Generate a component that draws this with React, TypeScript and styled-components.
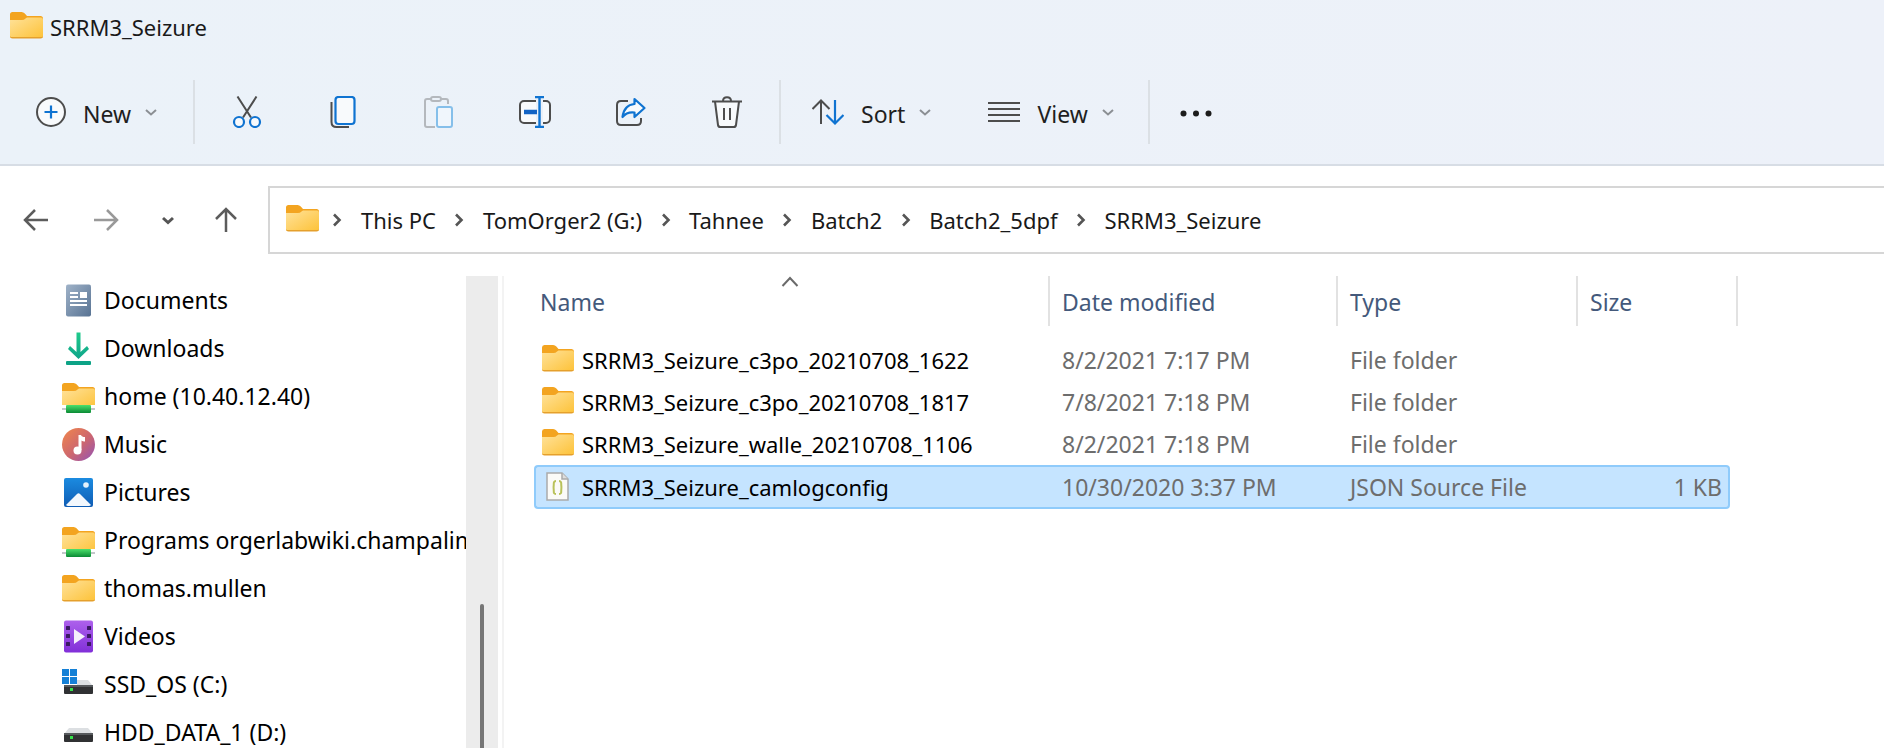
import React from "react";
import styled, { createGlobalStyle } from "styled-components";

const GlobalStyle = createGlobalStyle`
  * { box-sizing: border-box; }
  body { margin: 0; background: #fff; }
  body, button, table {
    font-family: "Noto Sans", "Open Sans", sans-serif;
    font-size: 23px;
    line-height: 32px;
    color: #191919;
  }
  svg { display: block; flex: none; }
`;

const Window = styled.div`
  display: flex;
  flex-direction: column;
  height: 100vh;
  overflow: hidden;
  background: #fff;
`;

const Header = styled.header`
  flex: none;
  background: linear-gradient(90deg, #ebf2f9, #edf1f9);
  border-bottom: 2px solid #d7dde5;
`;

const TitleBar = styled.div`
  display: flex;
  align-items: center;
  gap: 7px;
  height: 54px;
  padding: 0 10px;
`;

const Title = styled.h1`
  margin: 0;
  font-size: 22px;
  font-weight: 400;
`;

const Toolbar = styled.div`
  display: flex;
  align-items: center;
  height: 110px;
  padding-top: 6px;
`;

const Divider = styled.span`
  width: 2px;
  height: 64px;
  margin: 0 4px;
  background: #dbe0e5;
`;

const ToolButton = styled.button`
  display: flex;
  align-items: center;
  justify-content: center;
  width: 96px;
  height: 64px;
  padding: 0;
  border: 0;
  background: none;
  color: #1f1f1f;
`;

const MenuButton = styled(ToolButton)<{ $lead?: boolean }>`
  width: auto;
  padding: ${(p) => (p.$lead ? "0 32px 0 36px" : "0 30px 0 27px")};
`;

const MoreButton = styled(ToolButton)`
  width: 84px;
`;

const ToolLabel = styled.span`
  margin: 4px 14px 0 17px;
`;

const NavRow = styled.div`
  display: flex;
  flex: none;
  align-items: center;
  padding-top: 20px;
`;

const NavButtons = styled.div`
  display: flex;
  flex: none;
  align-items: center;
  gap: 24px;
  width: 268px;
  padding-left: 22px;
`;

const NavButton = styled.button<{ $w: number }>`
  display: flex;
  align-items: center;
  justify-content: center;
  width: ${(p) => p.$w}px;
  height: 44px;
  padding: 0;
  border: 0;
  background: none;
`;

const AddressBar = styled.nav`
  display: flex;
  flex: 1;
  align-items: center;
  height: 68px;
  padding-left: 16px;
  border: 2px solid #d6d6d6;
  border-right: 0;
`;

const Crumb = styled.a`
  font-size: 22px;
  color: #191919;
  text-decoration: none;
  white-space: nowrap;
`;

const CrumbSep = styled.span<{ $first?: boolean }>`
  display: flex;
  justify-content: center;
  width: ${(p) => (p.$first ? 42 : 47)}px;
  padding-right: ${(p) => (p.$first ? 6 : 0)}px;
`;

const Body = styled.div`
  display: flex;
  flex: 1;
  min-height: 0;
  padding-top: 22px;
`;

const Sidebar = styled.aside`
  flex: none;
  width: 466px;
  overflow: hidden;
`;

const Tree = styled.ul`
  margin: 0;
  padding: 0 0 0 62px;
  list-style: none;
`;

const TreeLink = styled.a`
  display: flex;
  align-items: center;
  gap: 9px;
  height: 48px;
  color: #000;
  text-decoration: none;
  white-space: nowrap;
`;

const ScrollTrack = styled.div`
  display: flex;
  flex: none;
  justify-content: center;
  align-items: flex-end;
  width: 32px;
  background: #ececec;
`;

const ScrollThumb = styled.div`
  width: 4px;
  height: 144px;
  border-radius: 2px 2px 0 0;
  background: #767676;
`;

const Files = styled.main`
  flex: 1;
  min-width: 0;
  margin-left: 4px;
  padding-left: 30px;
  border-left: 2px solid #f3f3f3;
`;

const FileTable = styled.table`
  width: 1204px;
  table-layout: fixed;
  border-collapse: separate;
  border-spacing: 0;
`;

const Column = styled.col<{ $w: number }>`
  width: ${(p) => p.$w}px;
`;

const HeadCell = styled.th<{ $name?: boolean }>`
  position: relative;
  height: 50px;
  padding: 2px 0 0 ${(p) => (p.$name ? 6 : 12)}px;
  border-right: 2px solid #e2e2e2;
  color: #44597b;
  font-weight: 400;
  text-align: left;
`;

const SortMark = styled.span`
  position: absolute;
  top: 0;
  left: 50%;
  margin-left: -10px;
`;

const Gap = styled.tr`
  height: 13px;
`;

const Cell = styled.td<{ $right?: boolean }>`
  height: 42px;
  padding: 0 ${(p) => (p.$right ? 8 : 0)}px 0 12px;
  color: #6d6d6d;
  white-space: nowrap;
  text-align: ${(p) => (p.$right ? "right" : "left")};
`;

const NameCell = styled(Cell)`
  padding-left: 8px;
  color: #000;
  font-size: 22px;
`;

const FileName = styled.div`
  display: flex;
  align-items: center;
  gap: 8px;
`;

const Row = styled.tr<{ $selected?: boolean }>`
  ${(p) =>
    p.$selected &&
    `
    td:not(:last-child) {
      height: 44px;
      background: #c5e4ff;
      border: 2px solid #8fcbfb;
      border-width: 2px 0;
    }
    td:first-child { padding-left: 6px; border-left-width: 2px; border-radius: 4px 0 0 4px; }
    td:nth-child(4) { padding-right: 6px; border-right-width: 2px; border-radius: 0 4px 4px 0; }
  `}
`;

const INK = "#4d4d4d";
const BLUE = "#0f73d1";

const Folder = ({ w = 33, net = false, raised = false }: { w?: number; net?: boolean; raised?: boolean }) => (
  <svg width={w} height="33" viewBox={raised ? "0 2 33 33" : "0 0 33 33"} preserveAspectRatio="none">
    <defs>
      <linearGradient id="fold" x1="0" y1="0" x2="1" y2="1">
        <stop offset="0" stopColor="#ffe29a" />
        <stop offset="1" stopColor="#fdc238" />
      </linearGradient>
      <linearGradient id="pipe" x1="0" y1="0" x2="0" y2="1">
        <stop offset="0" stopColor="#4ce06c" />
        <stop offset="1" stopColor="#0a8a35" />
      </linearGradient>
    </defs>
    <path d="M0 5.5Q0 3 2.500 3H11.500q2 0 3.300 1.500L17 7H30.500q2.500 0 2.500 2.500V15H0z" fill="#f3a420" />
    <path d="M0 11H12q2 0 3.500-1.500L17 8.500H31q2 0 2 2V27q0 2-2 2H2q-2 0-2-2z" fill="url(#fold)" />
    <path d="M0 27q0 2.500 2.500 2.500H30.500q2.500 0 2.500-2.500l-1 1H1z" fill="#e5a02c" />
    {net && (
      <>
        <rect x="0" y="25" width="33" height="8" fill="#fff" />
        <rect x="0" y="28" width="33" height="2" fill="#c3c7ca" />
        <rect x="4" y="25" width="25" height="8" rx="1" fill="url(#pipe)" />
      </>
    )}
  </svg>
);

const DocumentsIcon = () => (
  <svg width="33" height="33" viewBox="0 0 33 33">
    <defs>
      <linearGradient id="doc" x1="0" y1="0" x2="1" y2="1">
        <stop offset="0" stopColor="#9fb2c8" />
        <stop offset="1" stopColor="#587393" />
      </linearGradient>
    </defs>
    <rect x="4" y="0.500" width="25" height="32" rx="2" fill="url(#doc)" />
    <path d="M8 9H16M8 13H16M8 17H25M8 21H25" stroke="#fff" strokeWidth="2" />
    <rect x="18" y="8" width="7" height="6" fill="#fff" />
  </svg>
);

const DownloadsIcon = () => (
  <svg width="33" height="33" viewBox="0 0 33 33" fill="none">
    <defs>
      <linearGradient id="down" x1="0" y1="0" x2="0" y2="33" gradientUnits="userSpaceOnUse">
        <stop offset="0" stopColor="#1fcb8b" />
        <stop offset="1" stopColor="#0b9b8a" />
      </linearGradient>
    </defs>
    <path d="M14.500 0.500h4V20l6.500-6 2 3-10.500 10L6 17l2-3 6.500 6z" fill="url(#down)" />
    <rect x="4" y="29" width="25" height="4" rx="1" fill="#0da386" />
  </svg>
);

const MusicIcon = () => (
  <svg width="33" height="33" viewBox="0 0 33 33">
    <defs>
      <linearGradient id="mus" x1="0" y1="0" x2="1" y2="1">
        <stop offset="0" stopColor="#f2874a" />
        <stop offset="0.55" stopColor="#cc6670" />
        <stop offset="1" stopColor="#9152b8" />
      </linearGradient>
    </defs>
    <circle cx="16.500" cy="16.500" r="16.500" fill="url(#mus)" />
    <path d="M16.500 7h2.500c.5 1.500 2 2 4 2v4.500c-1.500 0-2.500-.3-3.500-1V22h-3z" fill="#fff" />
    <circle cx="15.500" cy="22.500" r="4" fill="#fff" />
  </svg>
);

const PicturesIcon = () => (
  <svg width="33" height="33" viewBox="0 0 33 33">
    <defs>
      <linearGradient id="pic" x1="0" y1="0" x2="0" y2="1">
        <stop offset="0" stopColor="#1b8be0" />
        <stop offset="1" stopColor="#0f5cb4" />
      </linearGradient>
    </defs>
    <rect x="2" y="2" width="29" height="29" rx="2" fill="url(#pic)" />
    <path d="M4 29 15 18q1.500-1.500 3 0L29 29q-1 1-2 1H6q-1 0-2-1z" fill="#f3f8fd" />
    <circle cx="24" cy="9" r="2.800" fill="#e4f2fc" />
  </svg>
);

const VideosIcon = () => (
  <svg width="33" height="33" viewBox="0 0 33 33">
    <defs>
      <linearGradient id="vid" x1="0" y1="0" x2="0" y2="1">
        <stop offset="0" stopColor="#ad61ec" />
        <stop offset="1" stopColor="#812fd8" />
      </linearGradient>
    </defs>
    <rect x="2" y="0.500" width="29" height="32" rx="2" fill="url(#vid)" />
    {[6, 14, 22].map((y) => (
      <g key={y} fill="#3a1a63">
        <rect x="4" y={y} width="4" height="4" rx="0.500" />
        <rect x="25" y={y} width="4" height="4" rx="0.500" />
      </g>
    ))}
    <path d="M12 9v15l11-7.500z" fill="#f5effb" />
  </svg>
);

const DriveIcon = ({ os = false }: { os?: boolean }) => (
  <svg width="33" height="33" viewBox="0 0 33 33">
    <path d="M7 12H26l5 6H2z" fill="#dcdfe2" />
    <rect x="2" y="17" width="29" height="9" rx="1" fill="#303133" />
    <rect x="2" y="17" width="29" height="2" fill="#56595c" />
    <rect x="8" y="20" width="3" height="3" fill="#35e04a" />
    {os && (
      <>
        <rect x="0" y="1" width="15" height="16" fill="#fff" />
        <path d="M0 1h7v7H0zM8 1h7v7H8zM0 9h7v7H0zM8 9h7v7H8z" fill="#1580d6" />
      </>
    )}
  </svg>
);

const JsonIcon = () => (
  <svg width="32" height="30" viewBox="0 0 32 30" fill="none">
    <path d="M5 1H20l6 6V28H5z" fill="#fbfbf8" stroke="#aaa" strokeWidth="1.500" />
    <path d="M20 1v6h6" fill="#ddd" stroke="#aaa" strokeWidth="1.500" />
    <path d="M14 9c-3 0-2 3-2.300 4.500-.2 1.500-.2 2.500 0 4C12 19.500 11 22 14 22M17 9c3 0 2 3 2.300 4.500.2 1.500.2 2.500 0 4C19 19.500 20 22 17 22" stroke="#b9c25a" strokeWidth="2" />
  </svg>
);

const Chevron = ({ color = "#8b8f94", width = 2 }: { color?: string; width?: number }) => (
  <svg width="12" height="12" viewBox="0 0 12 12" fill="none" stroke={color} strokeWidth={width}>
    <path d="M1 4l5 4.500L11 4" />
  </svg>
);

const ToolIcon = ({ children }: { children: React.ReactNode }) => (
  <svg width="32" height="32" viewBox="0 0 32 32" fill="none" stroke={INK} strokeWidth="2">
    {children}
  </svg>
);

const NewIcon = () => (
  <svg width="30" height="30" viewBox="0 0 30 30" fill="none">
    <circle cx="15" cy="15" r="14" stroke={INK} strokeWidth="2" fill="#f8fafc" />
    <path d="M15 8.500v13M8.500 15h13" stroke={BLUE} strokeWidth="2.200" />
  </svg>
);

const CutIcon = () => (
  <ToolIcon>
    <path d="M6.500 0.500 20 21.500M25.500 0.500 12 21.500" />
    <circle cx="8" cy="26" r="5" stroke={BLUE} strokeWidth="2.200" fill="#f8fafc" />
    <circle cx="24" cy="26" r="5" stroke={BLUE} strokeWidth="2.200" fill="#f8fafc" />
  </ToolIcon>
);

const CopyIcon = () => (
  <ToolIcon>
    <path d="M4.500 6V26q0 5 5 5H22" />
    <rect x="8.500" y="1" width="19" height="27" rx="3" stroke={BLUE} strokeWidth="2.200" fill="#f8fafc" />
  </ToolIcon>
);

const PasteIcon = () => (
  <ToolIcon>
    <g stroke="#b4b8bd">
      <path d="M8 3H4q-2 0-2 2V29q0 2 2 2h8M18 3h5q2 0 2 2v3" />
      <rect x="8" y="1" width="10" height="4" rx="2" />
    </g>
    <rect x="14" y="11" width="15" height="20" rx="2" stroke="#85bfea" fill="#f0f6fc" />
  </ToolIcon>
);

const RenameIcon = () => (
  <ToolIcon>
    <rect x="1" y="5" width="30" height="22" rx="4" fill="#f8fafc" />
    <rect x="17" y="2" width="7" height="28" fill="#ecf1f8" stroke="none" />
    <path d="M20.500 1v30M16 1h9M16 31h9" stroke={BLUE} strokeWidth="2.400" />
    <path d="M5 16h13" stroke="#1263c4" strokeWidth="4.500" />
  </ToolIcon>
);

const ShareIcon = () => (
  <ToolIcon>
    <path d="M13 5H6Q2 5 2 9V25q0 4 4 4H22q4 0 4-4V22" />
    <path d="M19.500 3 29.500 12 19.500 21V16.500Q12 15.500 7.500 21 9 9 19.500 8z" stroke={BLUE} strokeWidth="2.200" fill="#f8fafc" strokeLinejoin="round" />
  </ToolIcon>
);

const TrashIcon = () => (
  <ToolIcon>
    <path d="M4 5.500 7 29q.3 2 2.300 2H22.700q2 0 2.300-2L28 5.500" fill="#f8fafc" />
    <path d="M1 5.500H31M12 5c0-5 8-5 8 0M13 12v12M19 12v12" />
  </ToolIcon>
);

const SortIcon = () => (
  <ToolIcon>
    <path d="M9 28V4.500M0.500 13 9 4.500 17.500 13" />
    <path d="M23 4v23.500M14.500 19 23 27.500 31.500 19" stroke={BLUE} strokeWidth="2.200" />
  </ToolIcon>
);

const ViewIcon = () => (
  <ToolIcon>
    <path d="M0 7H32M0 13H32M0 19H32M0 25H32" />
  </ToolIcon>
);

const MoreIcon = () => (
  <svg width="32" height="32" viewBox="0 0 32 32" fill="#1c1c1c">
    <circle cx="3.500" cy="17.500" r="3" />
    <circle cx="16" cy="17.500" r="3" />
    <circle cx="28.500" cy="17.500" r="3" />
  </svg>
);

const ArrowIcon = ({ turn = 0, color = "#5c5c5c" }: { turn?: number; color?: string }) => (
  <svg width="26" height="26" viewBox="0 0 26 26" fill="none" stroke={color} strokeWidth="2.500">
    <path d="M25 13H2M12 3 2 13l10 10" transform={`rotate(${turn} 13 13)`} />
  </svg>
);

const tools = [
  { label: "Cut", icon: <CutIcon /> },
  { label: "Copy", icon: <CopyIcon /> },
  { label: "Paste", icon: <PasteIcon />, disabled: true },
  { label: "Rename", icon: <RenameIcon /> },
  { label: "Share", icon: <ShareIcon /> },
  { label: "Delete", icon: <TrashIcon /> },
];

const crumbs = ["This PC", "TomOrger2 (G:)", "Tahnee", "Batch2", "Batch2_5dpf", "SRRM3_Seizure"];

const places = [
  { name: "Documents", icon: <DocumentsIcon /> },
  { name: "Downloads", icon: <DownloadsIcon /> },
  { name: "home (10.40.12.40)", icon: <Folder net /> },
  { name: "Music", icon: <MusicIcon /> },
  { name: "Pictures", icon: <PicturesIcon /> },
  { name: "Programs orgerlabwiki.champalim", icon: <Folder net /> },
  { name: "thomas.mullen", icon: <Folder /> },
  { name: "Videos", icon: <VideosIcon /> },
  { name: "SSD_OS (C:)", icon: <DriveIcon os /> },
  { name: "HDD_DATA_1 (D:)", icon: <DriveIcon /> },
];

const files = [
  { name: "SRRM3_Seizure_c3po_20210708_1622", date: "8/2/2021 7:17 PM", type: "File folder", size: "" },
  { name: "SRRM3_Seizure_c3po_20210708_1817", date: "7/8/2021 7:18 PM", type: "File folder", size: "" },
  { name: "SRRM3_Seizure_walle_20210708_1106", date: "8/2/2021 7:18 PM", type: "File folder", size: "" },
  { name: "SRRM3_Seizure_camlogconfig", date: "10/30/2020 3:37 PM", type: "JSON Source File", size: "1 KB" },
];

export default function App() {
  return (
    <Window>
      <GlobalStyle />
      <Header>
        <TitleBar>
          <Folder raised />
          <Title>SRRM3_Seizure</Title>
        </TitleBar>
        <Toolbar>
          <MenuButton $lead>
            <NewIcon />
            <ToolLabel>New</ToolLabel>
            <Chevron />
          </MenuButton>
          <Divider />
          {tools.map((t) => (
            <ToolButton key={t.label} aria-label={t.label} disabled={t.disabled}>
              {t.icon}
            </ToolButton>
          ))}
          <Divider />
          <MenuButton>
            <SortIcon />
            <ToolLabel>Sort</ToolLabel>
            <Chevron />
          </MenuButton>
          <MenuButton>
            <ViewIcon />
            <ToolLabel>View</ToolLabel>
            <Chevron />
          </MenuButton>
          <Divider />
          <MoreButton aria-label="See more">
            <MoreIcon />
          </MoreButton>
        </Toolbar>
      </Header>

      <NavRow>
        <NavButtons>
          <NavButton $w={28} aria-label="Back"><ArrowIcon /></NavButton>
          <NavButton $w={64} aria-label="Forward"><ArrowIcon turn={180} color="#999" /></NavButton>
          <NavButton $w={12} aria-label="Recent locations"><Chevron color="#555" width={3} /></NavButton>
          <NavButton $w={56} aria-label="Up"><ArrowIcon turn={90} /></NavButton>
        </NavButtons>
        <AddressBar aria-label="Address">
          <Folder raised />
          {crumbs.map((c, i) => (
            <React.Fragment key={c}>
              <CrumbSep $first={i === 0}>
                <svg width="10" height="14" viewBox="0 0 10 14" fill="none" stroke="#555" strokeWidth="2.600">
                  <path d="M2 1.500 7.500 7 2 12.500" />
                </svg>
              </CrumbSep>
              <Crumb href="#">{c}</Crumb>
            </React.Fragment>
          ))}
        </AddressBar>
      </NavRow>

      <Body>
        <Sidebar>
          <Tree>
            {places.map((p) => (
              <li key={p.name}>
                <TreeLink href="#">
                  {p.icon}
                  {p.name}
                </TreeLink>
              </li>
            ))}
          </Tree>
        </Sidebar>
        <ScrollTrack>
          <ScrollThumb />
        </ScrollTrack>
        <Files>
          <FileTable>
            <colgroup>
              <Column $w={516} />
              <Column $w={288} />
              <Column $w={240} />
              <Column $w={152} />
              <Column $w={8} />
            </colgroup>
            <thead>
              <tr>
                <HeadCell $name scope="col" aria-sort="ascending">
                  Name
                  <SortMark>
                    <svg width="18" height="12" viewBox="0 0 18 12" fill="none" stroke="#6a6a6a" strokeWidth="2">
                      <path d="M1.500 10 9 2l7.500 8" />
                    </svg>
                  </SortMark>
                </HeadCell>
                <HeadCell scope="col">Date modified</HeadCell>
                <HeadCell scope="col">Type</HeadCell>
                <HeadCell scope="col" colSpan={2}>Size</HeadCell>
              </tr>
            </thead>
            <tbody>
              <Gap aria-hidden="true" />
              {files.map((f) => (
                <Row key={f.name} $selected={f.size !== ""}>
                  <NameCell>
                    <FileName>
                      {f.size ? <JsonIcon /> : <Folder w={32} raised />}
                      {f.name}
                    </FileName>
                  </NameCell>
                  <Cell>{f.date}</Cell>
                  <Cell>{f.type}</Cell>
                  <Cell $right>{f.size}</Cell>
                  <td />
                </Row>
              ))}
            </tbody>
          </FileTable>
        </Files>
      </Body>
    </Window>
  );
}
